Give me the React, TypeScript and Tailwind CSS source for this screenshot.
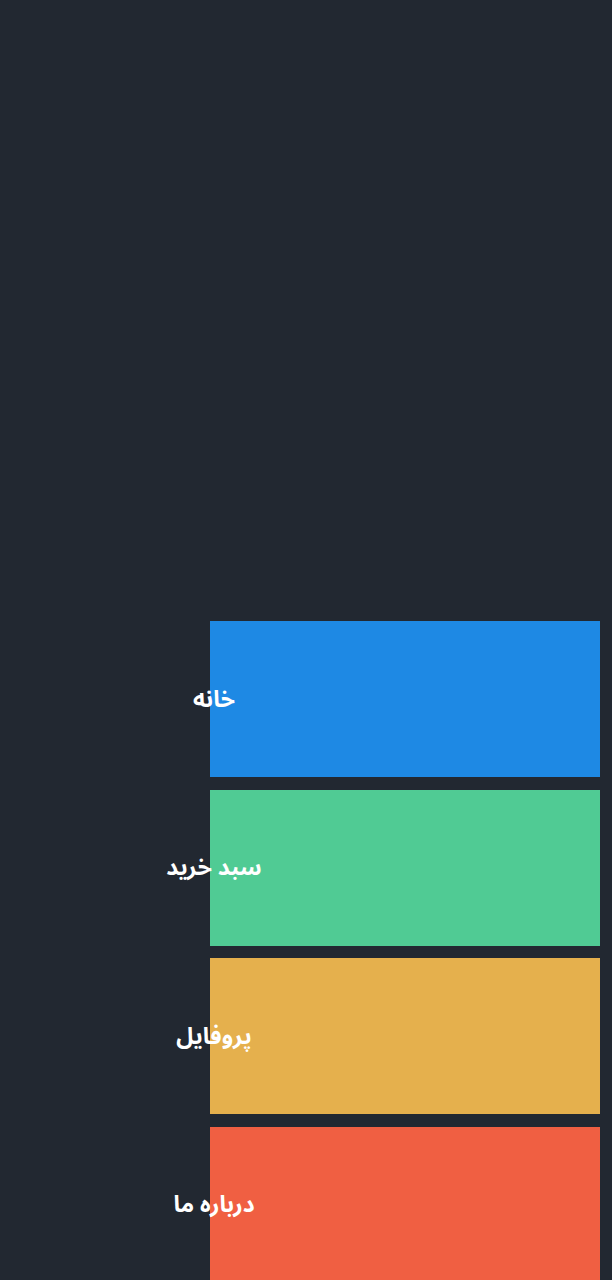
export default function App() {
  const items = [
    { label: "خانه", bg: "bg-[#1e89e4]" },
    { label: "سبد خرید", bg: "bg-[#50cb94]" },
    { label: "پروفایل", bg: "bg-[#e5b04d]" },
    { label: "درباره ما", bg: "bg-[#f05f42]" },
  ];
  return (
    <div className="min-h-[1280px] w-full bg-[#222831] pt-[621px] overflow-hidden">
      <div className="flex flex-col gap-[12.5px] ml-[210px] w-[390px]">
        {items.map((it) => (
          <div key={it.label} className={`${it.bg} h-[156px] flex items-center`}>
            <div className="w-[8px] flex justify-center">
              <span
                dir="rtl"
                className="whitespace-nowrap text-white font-bold text-[23px] leading-none"
                style={{ fontFamily: '"Noto Sans Arabic", "Vazirmatn", "Noto Sans", sans-serif' }}
              >
                {it.label}
              </span>
            </div>
          </div>
        ))}
      </div>
    </div>
  );
}
